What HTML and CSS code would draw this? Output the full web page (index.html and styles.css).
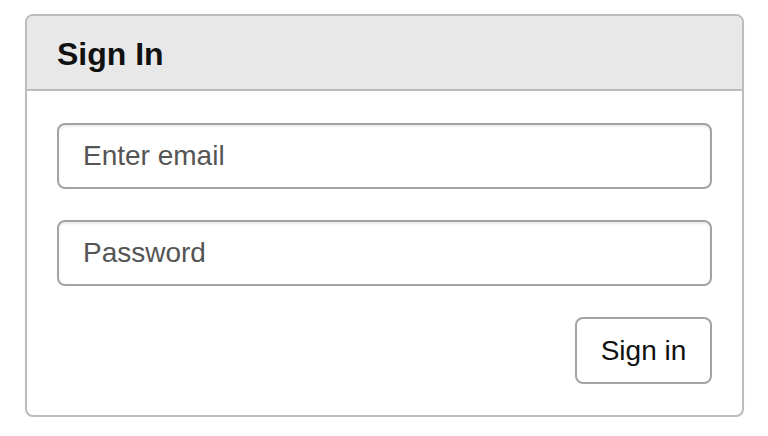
FILE: index.html
```html
<!DOCTYPE html>
<html>
<head>
<meta charset="utf-8">
<link rel="stylesheet" href="styles.css">
</head>
<body>
<div class="panel">
  <div class="panel-heading"><h3 class="panel-title">Sign In</h3></div>
  <form class="panel-body">
    <input class="field" type="email" placeholder="Enter email">
    <input class="field" type="password" placeholder="Password">
    <div class="actions"><button type="button" class="btn">Sign in</button></div>
  </form>
</div>
</body>
</html>
```
FILE: styles.css
```css
html, body { margin: 0; padding: 0; background: #fff; }
body { font-family: "Liberation Sans", Arial, Helvetica, sans-serif; }
.panel {
  margin: 14px 0 0 25px;
  width: 719px;
  height: 403px;
  box-sizing: border-box;
  border: 2px solid #bcbcbc;
  border-radius: 8px;
  box-shadow: 0 1px 2px rgba(0,0,0,0.05);
  overflow: hidden;
}
.panel-heading {
  height: 75px;
  box-sizing: border-box;
  padding: 0 30px;
  background: #e8e8e8;
  border-bottom: 2px solid #bcbcbc;
  display: flex;
  align-items: center;
}
.panel-title {
  margin: 3px 0 0 0;
  font-size: 32px;
  font-weight: bold;
  color: #111;
}
.panel-body {
  margin: 0;
  padding: 32px 30px 0 30px;
  display: flex;
  flex-direction: column;
  gap: 31px;
}
.field {
  display: block;
  width: 100%;
  height: 66px;
  box-sizing: border-box;
  margin: 0;
  padding: 0 24px;
  font-family: inherit;
  font-size: 28px;
  color: #333;
  background: #fff;
  border: 2px solid #a3a3a3;
  border-radius: 8px;
  box-shadow: inset 0 2px 2px rgba(0,0,0,0.075);
  outline: none;
}
.field::placeholder { color: #555; opacity: 1; }
.actions { display: flex; justify-content: flex-end; }
.btn {
  width: 137px;
  height: 67px;
  box-sizing: border-box;
  margin: 0;
  padding: 0;
  font-family: inherit;
  font-size: 28px;
  color: #111;
  background: #fff;
  border: 2px solid #a3a3a3;
  border-radius: 8px;
}
```
